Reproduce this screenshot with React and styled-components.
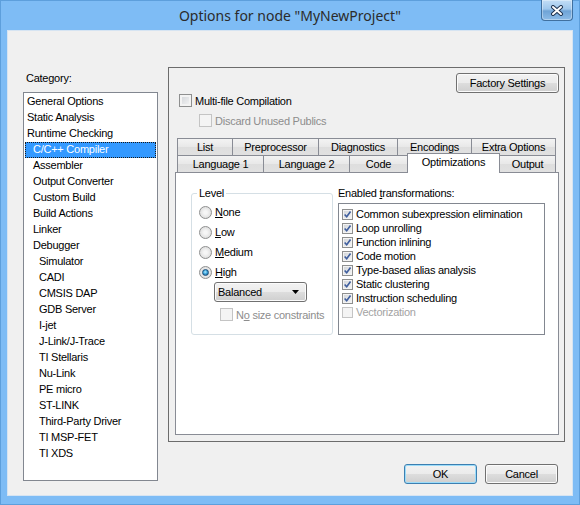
import React from "react";
import styled, { createGlobalStyle } from "styled-components";

const GlobalStyle = createGlobalStyle`
  html, body {
    margin: 0;
    padding: 0;
    background: #7ebcf5;
  }
  body {
    font-family: "Liberation Sans", Arial, sans-serif;
    font-size: 11px;
    letter-spacing: -0.25px;
    color: #000;
  }
`;

const Window = styled.div`
  box-sizing: border-box;
  width: 580px;
  height: 505px;
  display: flex;
  flex-direction: column;
  background: #7ebcf5;
  border: 1px solid #5d9fdc;
`;

const TitleBar = styled.div`
  flex: none;
  height: 29px;
  display: grid;
  grid-template-columns: 1fr auto 1fr;
`;

const Title = styled.div`
  grid-column: 2;
  align-self: center;
  font-family: "Noto Sans", "Liberation Sans", sans-serif;
  font-size: 14px;
  letter-spacing: 0;
  color: #2b2b2b;
  white-space: nowrap;
`;

const CloseButton = styled.div`
  grid-column: 3;
  justify-self: end;
  align-self: start;
  box-sizing: border-box;
  width: 32px;
  height: 21px;
  margin: -1px 6px 0 0;
  border: 1px solid #40709f;
  border-top: none;
  border-radius: 0 0 4px 4px;
  background: linear-gradient(#c3def6, #9fc7ec 45%, #6ea3d6 55%, #8dbce8);
  box-shadow: inset 0 0 0 1px rgba(255, 255, 255, 0.35);
  display: flex;
  align-items: center;
  justify-content: center;
`;

const Client = styled.div`
  flex: 1;
  margin: 0 6px 8px 6px;
  border: 1px solid #d6e4f2;
  background: #f0f0f0;
  display: grid;
  grid-template-columns: 135px 397px;
  column-gap: 10px;
  align-items: start;
  padding: 36px 7px 0 15px;
`;

const LeftColumn = styled.div`
  display: flex;
  flex-direction: column;
`;

const FieldLabel = styled.div`
  height: 25px;
  box-sizing: border-box;
  padding: 4px 0 0 3px;
  line-height: 14px;
`;

const CategoryList = styled.div`
  box-sizing: border-box;
  height: 389px;
  border: 1px solid #828790;
  background: #fff;
  padding-top: 1px;
`;

const CategoryItem = styled.div`
  box-sizing: border-box;
  height: 16px;
  line-height: 15px;
  margin: 0 1px;
  padding-left: ${(p) => 2 + p.level * 6}px;
  white-space: nowrap;
  color: ${(p) => (p.selected ? "#fff" : "#000")};
  background: ${(p) => (p.selected ? "#3399ff" : "transparent")};
  outline: ${(p) => (p.selected ? "1px dotted #1a1a1a" : "none")};
  outline-offset: -1px;
`;

const RightColumn = styled.div`
  display: flex;
  flex-direction: column;
`;

const Frame = styled.div`
  box-sizing: border-box;
  height: 375px;
  border: 1px solid #6c6c6c;
  display: flex;
  flex-direction: column;
  padding: 5px 5px 6px 6px;
`;

const Button = styled.button`
  box-sizing: border-box;
  width: ${(p) => p.width || 73}px;
  height: 20px;
  padding: 0;
  font-family: "Liberation Sans", Arial, sans-serif;
  font-size: 11px;
  letter-spacing: -0.25px;
  color: #000;
  border: 1px solid ${(p) => (p.primary ? "#3c7fb1" : "#707070")};
  border-radius: 3px;
  background: linear-gradient(#f2f2f2 0%, #ebebeb 50%, #dddddd 51%, #cfcfcf 100%);
  box-shadow: inset 0 0 0 1px ${(p) => (p.primary ? "#9cdcf9" : "#fbfbfb")};
  align-self: ${(p) => (p.right ? "flex-end" : "auto")};
  flex: none;
`;

const CheckRow = styled.div`
  display: flex;
  align-items: center;
  gap: 3px;
  height: 13px;
  margin: ${(p) => p.margin || "0"};
  color: ${(p) => (p.disabled ? "#8d8d8d" : "#000")};
  white-space: nowrap;
`;

const Box = styled.span`
  box-sizing: border-box;
  flex: none;
  width: ${(p) => p.size || 13}px;
  height: ${(p) => p.size || 13}px;
  border: 1px solid ${(p) => (p.disabled ? "#c4c4c4" : "#8e8f8f")};
  background: ${(p) =>
    p.disabled ? "#f4f4f4" : "linear-gradient(135deg, #cfd2d6, #f7f7f7)"};
  box-shadow: inset 0 0 0 ${(p) => (p.size ? 1 : 2)}px
    ${(p) => (p.disabled ? "#f4f4f4" : "#f3f3f3")};
  display: flex;
  align-items: center;
  justify-content: center;
`;

const Tabs = styled.div`
  flex: 1;
  display: flex;
  flex-direction: column;
  margin-top: 11px;
`;

const TabRow = styled.div`
  display: flex;
  align-items: flex-end;
  height: 17px;
  padding-left: 2px;
`;

const Tab = styled.div`
  box-sizing: border-box;
  position: relative;
  z-index: ${(p) => (p.active ? 2 : 1)};
  width: ${(p) => p.width}px;
  height: ${(p) => (p.active ? 20 : 17)}px;
  margin-left: -1px;
  margin-bottom: ${(p) => (p.active ? -1 : 0)}px;
  border: 1px solid #898c95;
  border-bottom: none;
  background: ${(p) =>
    p.active ? "#fff" : "linear-gradient(#f3f3f3, #e8e8e8 50%, #dedede 51%, #e1e1e1)"};
  text-align: center;
  line-height: 16px;
  white-space: nowrap;
  &:first-child {
    margin-left: 0;
  }
`;

const Panel = styled.div`
  flex: 1;
  border: 1px solid #898c95;
  background: #fff;
  display: flex;
  align-items: flex-start;
  gap: 5px;
  padding: 13px 0 0 15px;
`;

const Group = styled.fieldset`
  box-sizing: border-box;
  width: 142px;
  min-width: 0;
  margin: 0;
  padding: 2px 0 13px 7px;
  border: 1px solid #d5dfe5;
  border-radius: 3px;
`;

const GroupLegend = styled.legend`
  padding: 0 2px;
  margin-left: -2px;
  line-height: 14px;
  font-size: 11px;
`;

const RadioRow = styled.div`
  display: flex;
  align-items: center;
  gap: 3px;
  height: 20px;
`;

const Radio = styled.span`
  box-sizing: border-box;
  flex: none;
  width: 13px;
  height: 13px;
  border-radius: 50%;
  border: 1px solid #8e8f8f;
  background: radial-gradient(circle at 50% 50%, #f6f6f6 20%, #d3d3d3 100%);
  display: flex;
  align-items: center;
  justify-content: center;
`;

const RadioDot = styled.span`
  box-sizing: border-box;
  width: 7px;
  height: 7px;
  border-radius: 50%;
  border: 1px solid #1d4f7a;
  background: radial-gradient(circle at 45% 40%, #b6ecff 0%, #3ea6dd 45%, #15507f 100%);
`;

const Key = styled.span`
  text-decoration: underline;
`;

const Select = styled.div`
  box-sizing: border-box;
  width: 93px;
  height: 20px;
  margin-left: 15px;
  padding: 0 7px 0 3px;
  border: 1px solid #707070;
  border-radius: 3px;
  background: linear-gradient(#f2f2f2 0%, #ebebeb 50%, #dddddd 51%, #cfcfcf 100%);
  box-shadow: inset 0 0 0 1px #fbfbfb;
  display: flex;
  align-items: center;
  justify-content: space-between;
`;

const TransformColumn = styled.div`
  display: flex;
  flex-direction: column;
`;

const ColumnLabel = styled.div`
  line-height: 14px;
`;

const TransformList = styled.div`
  box-sizing: border-box;
  width: 207px;
  height: 132px;
  margin-top: 3px;
  border: 1px solid #828790;
  padding: 3px 0 0 3px;
  background: #fff;
`;

const TransformItem = styled.div`
  display: flex;
  align-items: center;
  gap: 3px;
  height: 14px;
  white-space: nowrap;
  color: ${(p) => (p.disabled ? "#a3a3a3" : "#000")};
`;

const Footer = styled.div`
  display: flex;
  justify-content: flex-end;
  gap: 8px;
  margin-top: 22px;
  padding-right: 7px;
`;

const CloseGlyph = () => (
  <svg width="14" height="11" viewBox="0 0 14 11">
    <path d="M3 2 L11 9 M11 2 L3 9" stroke="#1f3350" strokeWidth="4" strokeLinecap="round" />
    <path d="M3 2 L11 9 M11 2 L3 9" stroke="#fff" strokeWidth="2" strokeLinecap="round" />
  </svg>
);

const CheckMark = () => (
  <svg width="9" height="9" viewBox="0 0 11 11">
    <path d="M2 5.5 L4.5 8.3 L9.2 1.8" fill="none" stroke="#3f5e9e" strokeWidth="2" />
  </svg>
);

const Arrow = () => (
  <svg width="7" height="4" viewBox="0 0 7 4">
    <path d="M0 0 H7 L3.5 4 Z" fill="#000" />
  </svg>
);

const categories = [
  ["General Options", 0],
  ["Static Analysis", 0],
  ["Runtime Checking", 0],
  ["C/C++ Compiler", 1],
  ["Assembler", 1],
  ["Output Converter", 1],
  ["Custom Build", 1],
  ["Build Actions", 1],
  ["Linker", 1],
  ["Debugger", 1],
  ["Simulator", 2],
  ["CADI", 2],
  ["CMSIS DAP", 2],
  ["GDB Server", 2],
  ["I-jet", 2],
  ["J-Link/J-Trace", 2],
  ["TI Stellaris", 2],
  ["Nu-Link", 2],
  ["PE micro", 2],
  ["ST-LINK", 2],
  ["Third-Party Driver", 2],
  ["TI MSP-FET", 2],
  ["TI XDS", 2],
];

const backTabs = [
  ["List", 56],
  ["Preprocessor", 87],
  ["Diagnostics", 80],
  ["Encodings", 75],
  ["Extra Options", 85],
];

const frontTabs = [
  ["Language 1", 87],
  ["Language 2", 87],
  ["Code", 59],
  ["Optimizations", 93],
  ["Output", 57],
];

const levels = [
  ["N", "one", false],
  ["L", "ow", false],
  ["M", "edium", false],
  ["H", "igh", true],
];

const transforms = [
  "Common subexpression elimination",
  "Loop unrolling",
  "Function inlining",
  "Code motion",
  "Type-based alias analysis",
  "Static clustering",
  "Instruction scheduling",
];

export default function App() {
  return (
    <>
      <GlobalStyle />
      <Window>
        <TitleBar>
          <Title>Options for node "MyNewProject"</Title>
          <CloseButton>
            <CloseGlyph />
          </CloseButton>
        </TitleBar>
        <Client>
          <LeftColumn>
            <FieldLabel>Category:</FieldLabel>
            <CategoryList>
              {categories.map(([name, level]) => (
                <CategoryItem key={name} level={level} selected={name === "C/C++ Compiler"}>
                  {name}
                </CategoryItem>
              ))}
            </CategoryList>
          </LeftColumn>
          <RightColumn>
            <Frame>
              <Button width={103} right>
                Factory Settings
              </Button>
              <CheckRow margin="1px 0 0 4px">
                <Box />
                <span>Multi-file Compilation</span>
              </CheckRow>
              <CheckRow margin="7px 0 0 24px" disabled>
                <Box disabled />
                <span>Discard Unused Publics</span>
              </CheckRow>
              <Tabs>
                <TabRow>
                  {backTabs.map(([name, w]) => (
                    <Tab key={name} width={w}>
                      {name}
                    </Tab>
                  ))}
                </TabRow>
                <TabRow>
                  {frontTabs.map(([name, w]) => (
                    <Tab key={name} width={w} active={name === "Optimizations"}>
                      {name}
                    </Tab>
                  ))}
                </TabRow>
                <Panel>
                  <Group>
                    <GroupLegend>Level</GroupLegend>
                    {levels.map(([k, rest, on]) => (
                      <RadioRow key={k}>
                        <Radio>{on && <RadioDot />}</Radio>
                        <span>
                          <Key>{k}</Key>
                          {rest}
                        </span>
                      </RadioRow>
                    ))}
                    <Select>
                      <span>Balanced</span>
                      <Arrow />
                    </Select>
                    <CheckRow margin="6px 0 0 21px" disabled>
                      <Box disabled />
                      <span>
                        N<Key>o</Key> size constraints
                      </span>
                    </CheckRow>
                  </Group>
                  <TransformColumn>
                    <ColumnLabel>
                      Enabled <Key>t</Key>ransformations:
                    </ColumnLabel>
                    <TransformList>
                      {transforms.map((t) => (
                        <TransformItem key={t}>
                          <Box size={11}>
                            <CheckMark />
                          </Box>
                          <span>{t}</span>
                        </TransformItem>
                      ))}
                      <TransformItem disabled>
                        <Box size={11} disabled />
                        <span>Vectorization</span>
                      </TransformItem>
                    </TransformList>
                  </TransformColumn>
                </Panel>
              </Tabs>
            </Frame>
            <Footer>
              <Button primary>OK</Button>
              <Button>Cancel</Button>
            </Footer>
          </RightColumn>
        </Client>
      </Window>
    </>
  );
}
